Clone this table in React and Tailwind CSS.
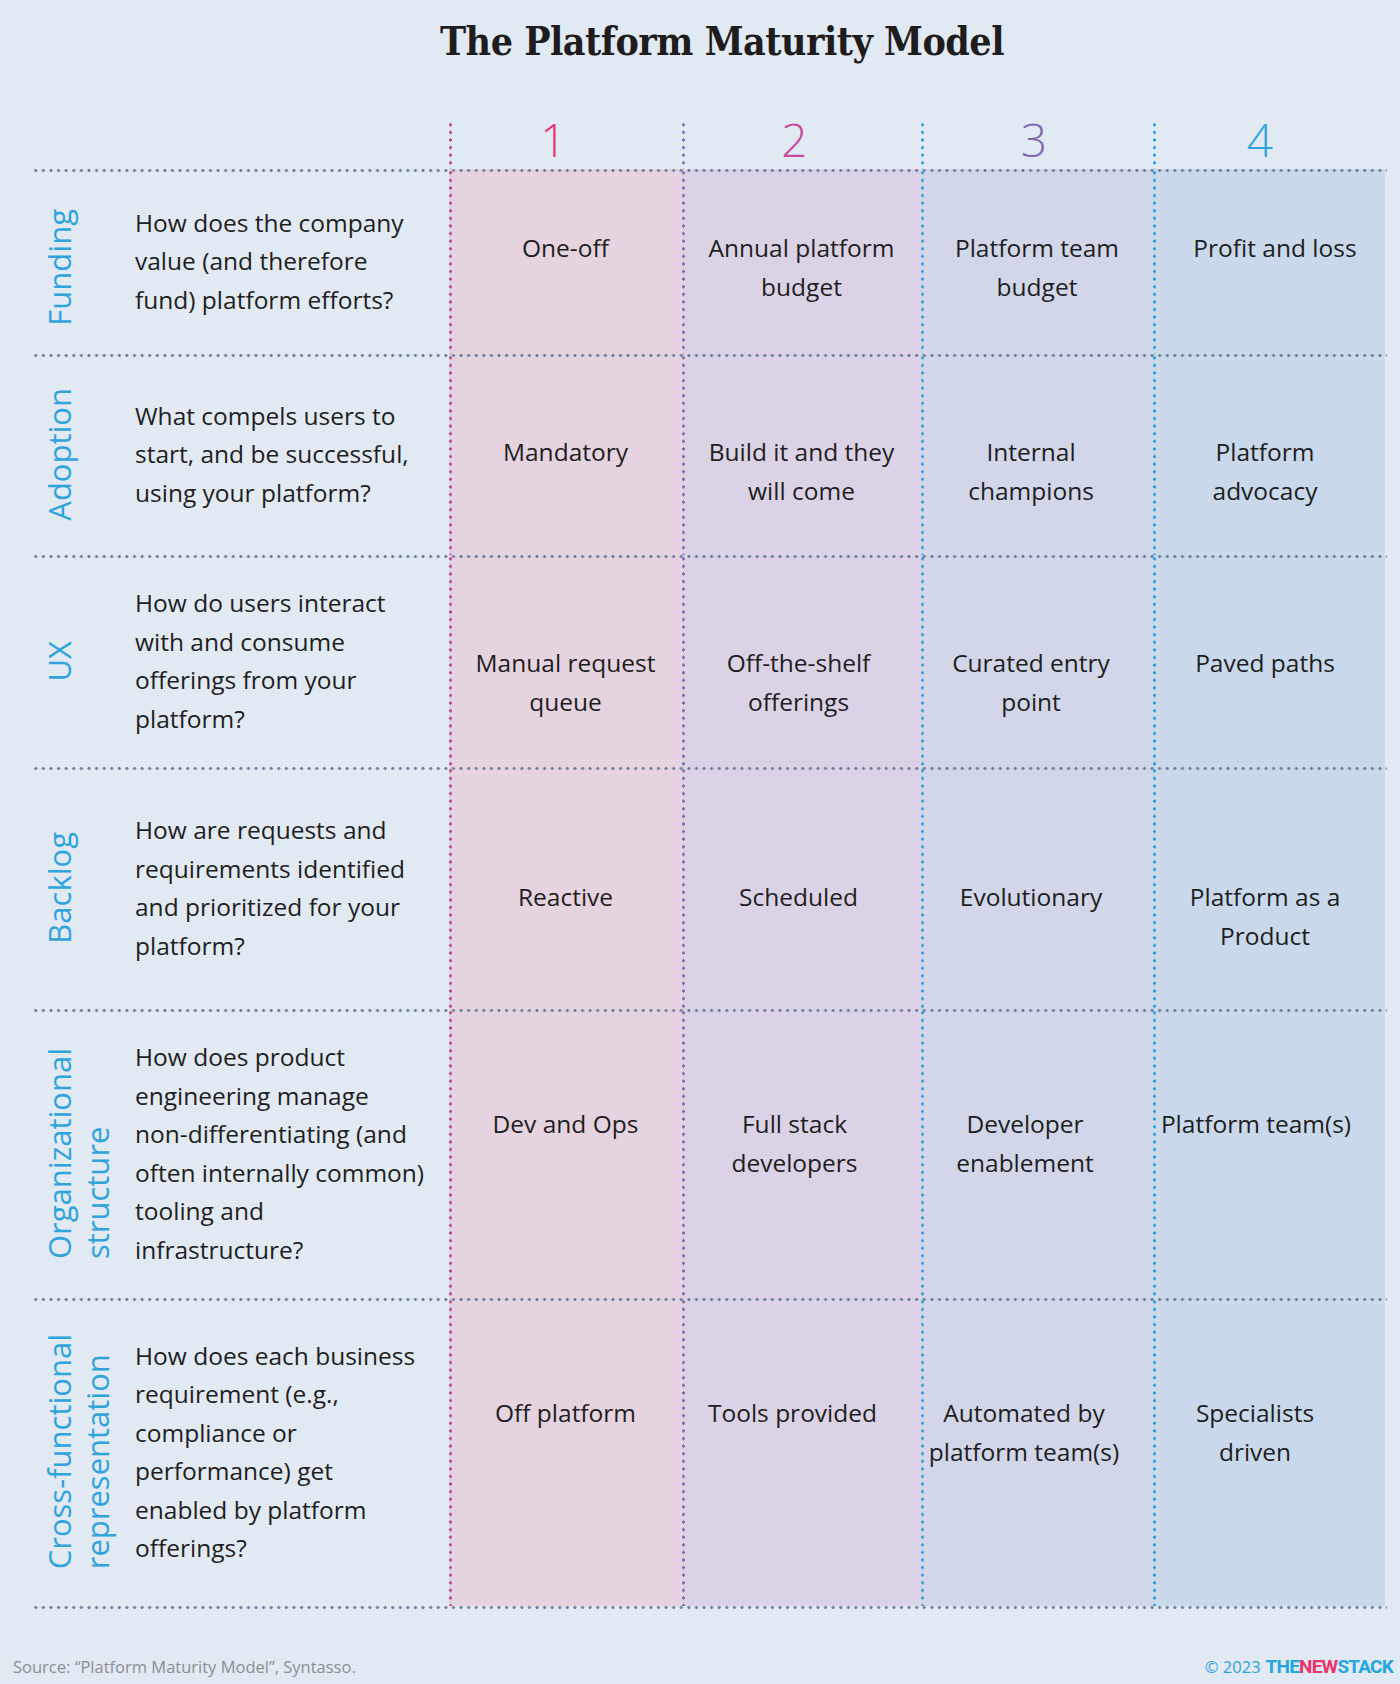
const dotsH = '[background-image:radial-gradient(circle,#6f829c_1.3px,transparent_1.8px)] [background-size:7.6px_3px] [background-repeat:repeat-x]'

// per-column styling, written out in full so Tailwind picks them up
const cols = [
  {
    num: '1',
    numCls: 'text-[#e8307c] pr-[24px]',
    line: '[background-image:radial-gradient(circle,#c2459a_1.3px,transparent_1.8px)]',
    fill: 'bg-[#e5d3df]',
  },
  {
    num: '2',
    numCls: 'text-[#c94a9f] pr-[14px]',
    line: '[background-image:radial-gradient(circle,#7d6db8_1.3px,transparent_1.8px)]',
    fill: 'bg-[#dbd3e5]',
  },
  {
    num: '3',
    numCls: 'text-[#8068b4] pr-[6px]',
    line: '[background-image:radial-gradient(circle,#3c9edb_1.3px,transparent_1.8px)]',
    fill: 'bg-[#d1d6e8]',
  },
  {
    num: '4',
    numCls: 'text-[#2aa3de] pr-[18px]',
    line: '[background-image:radial-gradient(circle,#1d9fe0_1.3px,transparent_1.8px)]',
    fill: 'bg-[#c9d9eb]',
  },
]

const vLine = '[background-size:3px_7.6px] [background-repeat:repeat-y] [background-position:0_0]'

const rows = [
  {
    label: ['Funding'],
    labelPad: 'pt-[12px]',
    question: ['How does the company', 'value (and therefore', 'fund) platform efforts?'],
    h: 'h-[185px]',
    top: 'pt-[60px]',
    values: [
      [['One-off'], ''],
      [['Annual platform', 'budget'], ''],
      [['Platform team', 'budget'], ''],
      [['Profit and loss'], 'pl-[12px]'],
    ],
  },
  {
    label: ['Adoption'],
    labelPad: '',
    question: ['What compels users to', 'start, and be successful,', 'using your platform?'],
    h: 'h-[201px]',
    top: 'pt-[79px]',
    values: [
      [['Mandatory'], ''],
      [['Build it and they', 'will come'], ''],
      [['Internal', 'champions'], 'pr-[12px]'],
      [['Platform', 'advocacy'], 'pr-[8px]'],
    ],
  },
  {
    label: ['UX'],
    labelPad: '',
    question: ['How do users interact', 'with and consume', 'offerings from your', 'platform?'],
    h: 'h-[212px]',
    top: 'pt-[89px]',
    values: [
      [['Manual request', 'queue'], ''],
      [['Off-the-shelf', 'offerings'], 'pr-[6px]'],
      [['Curated entry', 'point'], 'pr-[12px]'],
      [['Paved paths'], 'pr-[8px]'],
    ],
  },
  {
    label: ['Backlog'],
    labelPad: '',
    question: ['How are requests and', 'requirements identified', 'and prioritized for your', 'platform?'],
    h: 'h-[242px]',
    top: 'pt-[111px]',
    values: [
      [['Reactive'], ''],
      [['Scheduled'], 'pr-[6px]'],
      [['Evolutionary'], 'pr-[12px]'],
      [['Platform as a', 'Product'], 'pr-[8px]'],
    ],
  },
  {
    label: ['Organizational', 'structure'],
    labelPad: '',
    question: [
      'How does product',
      'engineering manage',
      'non-differentiating (and',
      'often internally common)',
      'tooling and',
      'infrastructure?',
    ],
    h: 'h-[289px]',
    top: 'pt-[96px]',
    values: [
      [['Dev and Ops'], ''],
      [['Full stack', 'developers'], 'pr-[14px]'],
      [['Developer', 'enablement'], 'pr-[24px]'],
      [['Platform team(s)'], 'pr-[26px]'],
    ],
  },
  {
    label: ['Cross-functional', 'representation'],
    labelPad: '',
    question: [
      'How does each business',
      'requirement (e.g.,',
      'compliance or',
      'performance) get',
      'enabled by platform',
      'offerings?',
    ],
    h: 'h-[308px]',
    top: 'pt-[96px]',
    values: [
      [['Off platform'], ''],
      [['Tools provided'], 'pr-[18px]'],
      [['Automated by', 'platform team(s)'], 'pr-[26px]'],
      [['Specialists', 'driven'], 'pr-[28px]'],
    ],
  },
]

const grid = 'grid grid-cols-[417px_233px_239px_232px_232px]'

function HLine() {
  return <div className={`relative z-10 -mb-[3px] h-[3px] w-[1355px] ${dotsH}`} />
}

function Lines({ items }) {
  return items.map((t, i) => (
    <div key={i} className="whitespace-nowrap">
      {t}
    </div>
  ))
}

function Row({ row }) {
  return (
    <div className={`${grid} ${row.h}`}>
      <div className="flex items-center">
        <div className={`flex w-[103px] items-center pl-[8px] ${row.labelPad}`}>
          <div className="rotate-180 text-[31px] font-normal leading-[38px] text-[#2ea3dc] [writing-mode:vertical-rl]">
            <Lines items={row.label} />
          </div>
        </div>
        <div className="text-[24.5px] leading-[38.5px] text-[#1e1e1e]">
          <Lines items={row.question} />
        </div>
      </div>
      {row.values.map(([text, shift], i) => (
        <div
          key={i}
          className={`flex flex-col items-center text-center text-[24.5px] leading-[38.5px] text-[#1e1e1e] ${row.top} ${shift} ${cols[i].fill} ${cols[i].line} ${vLine}`}
        >
          <Lines items={text} />
        </div>
      ))}
    </div>
  )
}

export default function App() {
  return (
    <div className="flex h-[1684px] w-[1400px] flex-col bg-[#e1e9f2] font-['Open_Sans','Noto_Sans',sans-serif]">
      <div className="flex h-[121px] justify-center pl-[44px] pt-[16px]">
        <h1 className="font-['DejaVu_Serif_Condensed','DejaVu_Serif',serif] text-[39px] font-bold leading-[50px] tracking-[-0.5px] text-[#1f1c1d]">
          The Platform Maturity Model
        </h1>
      </div>

      <div className="ml-[32px] flex flex-col">
        {/* level numbers */}
        <div className={`${grid} h-[48px]`}>
          <div />
          {cols.map((c) => (
            <div
              key={c.num}
              className={`flex justify-center text-[46px] font-light leading-[36px] ${c.numCls} ${c.line} ${vLine}`}
            >
              {c.num}
            </div>
          ))}
        </div>

        {rows.map((row, i) => (
          <div key={i}>
            <HLine />
            <Row row={row} />
          </div>
        ))}
        <HLine />
      </div>

      <div className="flex items-start justify-between pl-[13px] pr-[7px] pt-[50px] text-[16.5px] leading-[22px]">
        <span className="text-[#8a8f96]">Source: “Platform Maturity Model”, Syntasso.</span>
        <span className="flex items-center gap-[5px]">
          <span className="text-[#2ea3dc]">© 2023</span>
          <span className="font-['Roboto',sans-serif] text-[19px] font-bold tracking-[-0.8px]">
            <span className="text-[#24a6e0]">THE</span>
            <span className="text-[#ea3469]">NEW</span>
            <span className="text-[#24a6e0]">STACK</span>
          </span>
        </span>
      </div>
    </div>
  )
}
